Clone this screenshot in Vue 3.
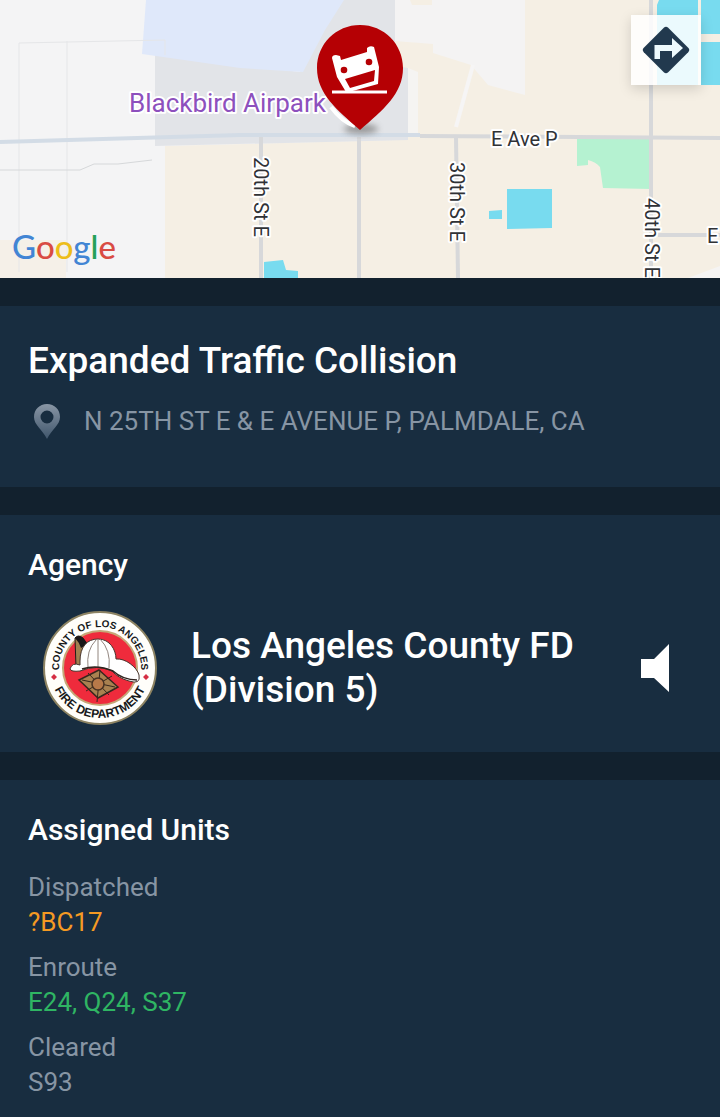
<template>
  <main class="incident">
    <!-- Map -->
    <section class="map" aria-label="Incident map">
      <svg class="map-canvas" viewBox="0 0 720 278" preserveAspectRatio="xMidYMid slice">
        <defs>
          <filter id="pinShadow" x="-50%" y="-50%" width="200%" height="200%">
            <feGaussianBlur stdDeviation="3" />
          </filter>
        </defs>

        <!-- land -->
        <rect width="720" height="278" fill="#f5efe4" />
        <path d="M0 0H395V140L165 146V278H0Z" fill="#f4f4f5" />
        <path d="M0 240H66V278H0Z" fill="#f5f0e8" />
        <path d="M395 0H525V95L488 85L471 65L433 53V44L395 41Z" fill="#f4f3f3" />
        <path d="M408 68L418 72V136H408Z" fill="#f5f4f2" />
        <path d="M410 0H432V5H412Z" fill="#f5efe4" />
        <path d="M155 55V146L408 140V68L395 66V0H340L300 72Z" fill="#e2e4e8" />
        <path d="M146 0H344L325 30L303 72L240 68L142 54Z" fill="#dfe8fa" />
        <path d="M688 278L720 266V278Z" fill="#f5f4f3" />

        <!-- minor tracks -->
        <g fill="none" stroke="#e5e6e8" stroke-width="1">
          <path d="M19 272V43L165 40V55" />
          <path d="M67 41V272" />
          <path d="M0 170H80L94 164H118L152 160" stroke="#d6d8da" />
        </g>
        <path d="M473 65L456 127" stroke="#f6f5f5" stroke-width="4" />

        <!-- parks and water -->
        <path d="M577 138H651V189L603 188L600 167Q596 162 588 160V165L577 166Z" fill="#b5f2d1" />
        <g fill="#78dbef">
          <path d="M507 189H552V228L507 229Z" />
          <path d="M489 211L502 210V219H489Z" />
          <path d="M264 262L283 260L286 270L298 271V278H264Z" />
          <path d="M659 0H698V85H657V5Z" />
          <path d="M701 0H720V34H701Z" />
          <path d="M701 42H720V85H701Z" />
        </g>

        <!-- roads -->
        <g fill="none" stroke="#d7d8da" stroke-width="4">
          <path d="M0 142L240 135H420" stroke="#d3dce6" />
          <path d="M420 136L720 138" />
          <path d="M261 137V278" />
          <path d="M359 137V278" />
          <path d="M456 137L458 278" />
          <path d="M651 0V278" />
          <path d="M658 235H720" />
        </g>

        <!-- labels -->
        <g class="label">
          <text class="place" x="129" y="112">Blackbird Airpark</text>
          <text x="491" y="146">E Ave P</text>
          <text x="707" y="243">E</text>
          <text transform="translate(254 157) rotate(90)">20th St E</text>
          <text transform="translate(450 162) rotate(90)">30th St E</text>
          <text transform="translate(645 198) rotate(90)">40th St E</text>
        </g>

        <!-- incident pin -->
        <ellipse cx="361" cy="129" rx="17" ry="5" fill="#777" opacity=".7" filter="url(#pinShadow)" />
        <path d="M331 107Q342 122 355 126" fill="none" stroke="#fff" stroke-width="4" />
        <path
          d="M360 25C336 25 317 44 317 68C317 94 337 110 360 130C383 110 403 94 403 68C403 44 384 25 360 25Z"
          fill="#b50004"
        />
        <path
          d="M332 58Q332 55 336 55L340 56L341 60L367 52L367 48Q370 45 374 47L379 67L378 84L349 92H346L337 77Z"
          fill="#fff"
        />
        <path d="M345 79L375 70L374 81L350 88Z" fill="#b50004" />
        <circle cx="344" cy="70" r="3.3" fill="#b50004" />
        <circle cx="369" cy="62" r="3.3" fill="#b50004" />
        <path d="M332 92H387" stroke="#fff" stroke-width="3" />
      </svg>

      <span class="google">
        <span
          v-for="(letter, index) in googleLetters"
          :key="index"
          :class="letter.tone"
        >{{ letter.char }}</span>
      </span>

      <button class="directions" type="button" aria-label="Directions">
        <svg viewBox="0 0 48 48">
          <path
            d="M21.8 1.8Q24 -.3 26.2 1.8L46.2 21.8Q48.3 24 46.2 26.2L26.2 46.2Q24 48.3 21.8 46.2L1.8 26.2Q-.3 24 1.8 21.8Z"
            fill="#22394e"
          />
          <path d="M12.5 33V19H30V12L41 22L30 32V25H18V33Z" fill="#eefafd" />
        </svg>
      </button>
    </section>

    <!-- Incident summary -->
    <section class="panel summary">
      <h1>Expanded Traffic Collision</h1>
      <p class="address">
        <svg class="address-icon" viewBox="0 0 26 35" aria-hidden="true">
          <defs>
            <linearGradient id="markerFade" x1="0" y1="0" x2="0" y2="1">
              <stop offset="0" stop-color="#8996a5" />
              <stop offset="1" stop-color="#40566c" />
            </linearGradient>
          </defs>
          <path
            d="M13 0C5.500 0 0 5.500 0 13C0 21 8 25 13 35C18 25 26 21 26 13C26 5.500 20.500 0 13 0ZM13 6.500A6.500 6.500 0 1 1 13 19.500A6.500 6.500 0 1 1 13 6.500Z"
            fill="url(#markerFade)"
            fill-rule="evenodd"
          />
        </svg>
        <span>N 25TH ST E &amp; E AVENUE P, PALMDALE, CA</span>
      </p>
    </section>

    <!-- Agency -->
    <section class="panel">
      <h2>Agency</h2>
      <div class="agency">
        <svg class="seal" viewBox="0 0 114 114">
          <defs>
            <path id="sealTop" d="M17 66A41 41 0 1 1 97 66" />
            <path id="sealBottom" d="M7 57A50 50 0 0 0 107 57" />
          </defs>
          <circle cx="57" cy="57" r="56" fill="#fffefa" stroke="#8d8362" stroke-width="2" />
          <circle cx="57" cy="57" r="37" fill="#ef2b3c" stroke="#c5a777" stroke-width="2" />
          <text class="seal-text">
            <textPath href="#sealTop" startOffset="50%">COUNTY OF LOS ANGELES</textPath>
          </text>
          <text class="seal-text seal-text-large">
            <textPath href="#sealBottom" startOffset="50%">FIRE DEPARTMENT</textPath>
          </text>
          <path d="M11 63L14 66L11 69L8 66ZM103 63L106 66L103 69L100 66Z" fill="#d52e42" />

          <!-- helmet -->
          <path d="M32 27Q35 23 40 27L44 33L38 60L33 56Z" fill="#a08050" stroke="#221c18" />
          <path d="M32 27Q36 23 40 27L45 33L38 37Q36 31 32 27Z" fill="#191718" />
          <path
            d="M27 58Q29 51 37 54V50C37 36 44 28 55 28C67 28 73 39 73 48C82 47 94 56 96 64Q98 74 86 70Q75 67 69 60Q54 53 37 60Q28 61 27 58Z"
            fill="#fff"
            stroke="#48362e"
          />
          <path
            d="M55 28V57M53 29Q43 39 45 57M57 28Q68 39 66 57"
            fill="none"
            stroke="#92867f"
          />
          <path d="M39 58Q54 53 70 60Q80 69 94 69" fill="none" stroke="#30231e" stroke-width="1.5" />
          <!-- badge -->
          <path d="M56 59L75 76L55 87L36 69Z" fill="#a98150" stroke="#38271d" stroke-width="1.5" />
          <path d="M45 62L66 84M69 65L43 80M57 59L54 91M39 69L72 76" fill="none" stroke="#38271d" />
          <circle cx="55" cy="73" r="6" fill="#b87949" stroke="#493222" stroke-width="1.5" />
        </svg>
        <p class="agency-name">Los Angeles County FD (Division 5)</p>
        <button class="speaker" type="button" aria-label="Listen">
          <svg viewBox="0 0 28 48">
            <path d="M0 15H13L28 0V48L13 34H0Z" fill="#fff" />
          </svg>
        </button>
      </div>
    </section>

    <!-- Units -->
    <section class="panel units">
      <h2>Assigned Units</h2>
      <dl>
        <div v-for="group in unitGroups" :key="group.status" class="unit-group">
          <dt>{{ group.status }}</dt>
          <dd :class="group.tone">{{ group.units.join(', ') }}</dd>
        </div>
      </dl>
    </section>
  </main>
</template>

<script setup>
const googleLetters = [
  { char: 'G', tone: 'blue' },
  { char: 'o', tone: 'red' },
  { char: 'o', tone: 'yellow' },
  { char: 'g', tone: 'blue' },
  { char: 'l', tone: 'green' },
  { char: 'e', tone: 'red' },
]

const unitGroups = [
  { status: 'Dispatched', tone: 'dispatched', units: ['?BC17'] },
  { status: 'Enroute', tone: 'enroute', units: ['E24', 'Q24', 'S37'] },
  { status: 'Cleared', tone: 'cleared', units: ['S93'] },
]
</script>

<style>
body {
  margin: 0;
  background: #12212e;
}
</style>

<style scoped>
.incident {
  display: flex;
  flex-direction: column;
  gap: 28px;
  min-height: 100vh;
  background: #12212e;
  color: #fff;
  font-family: Roboto, sans-serif;
}

h1,
h2,
p,
dl,
dd {
  margin: 0;
}

button {
  padding: 0;
  border: none;
  cursor: pointer;
}

svg {
  display: block;
}

/* Map */
.map {
  position: relative;
}

.map-canvas {
  width: 100%;
  height: 278px;
}

.label {
  font-size: 20px;
  fill: #303236;
  stroke: #fff;
  stroke-width: 4px;
  stroke-linejoin: round;
  paint-order: stroke;
}

.label .place {
  font-size: 26px;
  fill: #8d50bd;
}

.google {
  position: absolute;
  left: 12px;
  bottom: 12px;
  font: 500 33px/40px Lato, sans-serif;
}

.blue {
  color: #4285d4;
}

.red {
  color: #d94b43;
}

.yellow {
  color: #edbd18;
}

.green {
  color: #25a05a;
}

.directions {
  position: absolute;
  top: 15px;
  right: 19px;
  display: grid;
  place-items: center;
  width: 70px;
  height: 70px;
  background: rgba(255, 255, 255, 0.85);
  box-shadow: 0 4px 12px rgba(0, 0, 0, 0.15);
}

.directions svg {
  width: 48px;
  height: 48px;
}

/* Panels */
.panel {
  padding: 32px 28px 27px;
  background: #182d40;
}

h1 {
  font-size: 37px;
  font-weight: 500;
  line-height: 46px;
}

h2 {
  font-size: 30px;
  font-weight: 500;
  line-height: 36px;
}

.summary {
  padding-bottom: 48px;
}

.address {
  display: flex;
  align-items: center;
  gap: 24px;
  margin-top: 20px;
  padding-left: 6px;
  color: #8795a4;
  font-size: 26px;
  line-height: 35px;
}

.address-icon {
  flex: none;
  width: 26px;
  height: 35px;
}

.agency {
  display: flex;
  align-items: center;
  gap: 34px;
  margin-top: 28px;
  padding: 0 23px 0 15px;
}

.seal {
  flex: none;
  width: 114px;
  height: 114px;
}

.seal-text {
  font: bold 10px "Liberation Sans", sans-serif;
  fill: #17191b;
  text-anchor: middle;
}

.seal-text-large {
  font-size: 12px;
}

.agency-name {
  flex: 1;
  font-size: 37px;
  font-weight: 500;
  line-height: 44px;
}

.speaker {
  flex: none;
  background: none;
}

.speaker svg {
  width: 28px;
  height: 48px;
}

.units {
  flex: 1;
  padding-bottom: 16px;
}

dl {
  display: flex;
  flex-direction: column;
  gap: 10px;
  margin-top: 22px;
  font-size: 26px;
  line-height: 35px;
}

dt,
.cleared {
  color: #8795a4;
}

.dispatched {
  color: #f59a23;
}

.enroute {
  color: #2fb563;
}
</style>
